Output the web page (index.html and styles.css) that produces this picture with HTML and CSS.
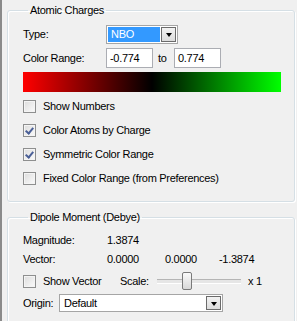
FILE: index.html
```html
<!DOCTYPE html>
<html lang="en">
    <head>
        <meta charset="utf-8">
        <title>Charges</title>
        <link rel="stylesheet" href="styles.css">
    </head>
    <body>
        <div class="panel">
            <fieldset class="group charges">
                <legend>Atomic Charges</legend>
                <div class="row">
                    <span class="label">Type:</span>
                    <div class="combo type-combo">
                        <span class="combo-text selected">NBO</span>
                        <span class="combo-btn"><i></i></span>
                    </div>
                </div>
                <div class="row">
                    <span class="label">Color Range:</span>
                    <span class="textbox">-0.774</span>
                    <span class="to">to</span>
                    <span class="textbox">0.774</span>
                </div>
                <div class="gradient"></div>
                <label class="check"><span class="box"></span>Show Numbers</label>
                <label class="check"><span class="box on"></span>Color Atoms by Charge</label>
                <label class="check"><span class="box on"></span>Symmetric Color Range</label>
                <label class="check"><span class="box"></span>Fixed Color Range (from Preferences)</label>
            </fieldset>

            <fieldset class="group dipole">
                <legend>Dipole Moment (Debye)</legend>
                <div class="values">
                    <span class="label">Magnitude:</span>
                    <span>1.3874</span>
                    <span></span>
                    <span></span>
                    <span class="label">Vector:</span>
                    <span>0.0000</span>
                    <span>0.0000</span>
                    <span>-1.3874</span>
                </div>
                <div class="vector-row">
                    <label class="check"><span class="box"></span>Show Vector</label>
                    <span class="scale">Scale:</span>
                    <div class="slider"><span class="thumb"></span></div>
                    <span class="times">x 1</span>
                </div>
                <div class="origin-row">
                    <span class="origin-label">Origin:</span>
                    <div class="combo origin-combo">
                        <span class="combo-text">Default</span>
                        <span class="combo-btn"><i></i></span>
                    </div>
                </div>
            </fieldset>
        </div>
    </body>
</html>
```

FILE: styles.css
```css
*{
    box-sizing: border-box;
}
body{
    margin: 0;
    padding: 0;
    background: #f0f0f0;
    font-family: 'Liberation Sans', Arial, sans-serif;
    font-size: 11px;
    letter-spacing: -0.3px;
    color: #000;
    height: 321px;
    overflow: hidden;
}
.panel{
    height: 100%;
    border-left: 2px solid #8a8a8a;
    padding: 4px 2px 0 5px;
}
.group{
    margin: 0;
    border: 1px solid #d5dfe5;
    border-radius: 3px;
    box-shadow: inset 1px 1px 0 #fff, 1px 1px 0 #fff;
    padding: 0 0 0 15px;
    width: 288px;
}
.group legend{
    padding: 0 2px;
    margin-left: 5px;
    line-height: 13px;
}
.charges{
    padding-top: 7px;
    padding-bottom: 11px;
}
.dipole{
    margin-top: 9px;
    padding-top: 6px;
    height: 120px;
}
.row{
    display: flex;
    align-items: center;
    height: 20px;
    margin-bottom: 4px;
}
.label{
    width: 83px;
    flex: none;
}
.combo{
    display: flex;
    align-items: stretch;
    height: 19px;
    border: 1px solid #a5a5a5;
    background: #fff;
    padding: 1px;
}
.type-combo{
    width: 72px;
}
.combo-text{
    flex: 1;
    padding-left: 3px;
    line-height: 15px;
}
.combo-text.selected{
    background: #3399ff;
    color: #fff;
}
.combo-btn{
    width: 15px;
    margin-left: 1px;
    border: 1px solid #6b6b6b;
    background: linear-gradient(#f2f2f2, #dcdcdc);
    display: flex;
    align-items: center;
    justify-content: center;
}
.combo-btn i{
    width: 0;
    height: 0;
    border-left: 3.5px solid transparent;
    border-right: 3.5px solid transparent;
    border-top: 4px solid #000;
    margin-top: 2px;
}
.textbox{
    width: 47px;
    height: 20px;
    border: 1px solid #abadb3;
    background: #fff;
    padding-left: 3px;
    line-height: 18px;
}
.to{
    width: 21px;
    padding-left: 5px;
}
.gradient{
    width: 258px;
    height: 20px;
    margin-top: 1px;
    margin-bottom: 2px;
    background: linear-gradient(to right, #ff0000, #000000 50%, #00ff00);
}
.check{
    display: flex;
    align-items: center;
    height: 24px;
}
.box{
    width: 13px;
    height: 13px;
    border: 1px solid #8e8f8f;
    background: linear-gradient(135deg, #dcdcdc, #fbfbfb);
    box-shadow: inset 0 0 0 1px #f4f4f4;
    margin-right: 7px;
    position: relative;
}
.box.on::after{
    content: "";
    position: absolute;
    left: 3px;
    top: 1px;
    width: 3px;
    height: 6px;
    border-right: 2px solid #4a5f97;
    border-bottom: 2px solid #4a5f97;
    transform: rotate(40deg);
}
.values{
    display: grid;
    grid-template-columns: 84px 58px 54px 40px;
    grid-auto-rows: 19px;
    align-items: center;
    margin-top: 0;
}
.vector-row{
    display: flex;
    align-items: center;
    height: 22px;
    margin-top: 2px;
}
.vector-row .check{
    width: 97px;
}
.scale{
    width: 37px;
}
.slider{
    width: 84px;
    height: 18px;
    position: relative;
    display: flex;
    align-items: center;
}
.slider::before{
    content: "";
    width: 100%;
    height: 3px;
    border-top: 1px solid #b5b5b5;
    border-bottom: 1px solid #fff;
    background: #e6e6e6;
}
.thumb{
    position: absolute;
    left: 25px;
    top: 0;
    width: 10px;
    height: 18px;
    border: 1px solid #7a7a7a;
    border-radius: 2px;
    background: linear-gradient(#fafafa, #d8d8d8);
}
.times{
    margin-left: 7px;
}
.origin-row{
    display: flex;
    align-items: center;
    height: 20px;
    margin-top: 1px;
}
.origin-label{
    width: 36px;
}
.origin-combo{
    width: 164px;
    height: 18px;
}
```
